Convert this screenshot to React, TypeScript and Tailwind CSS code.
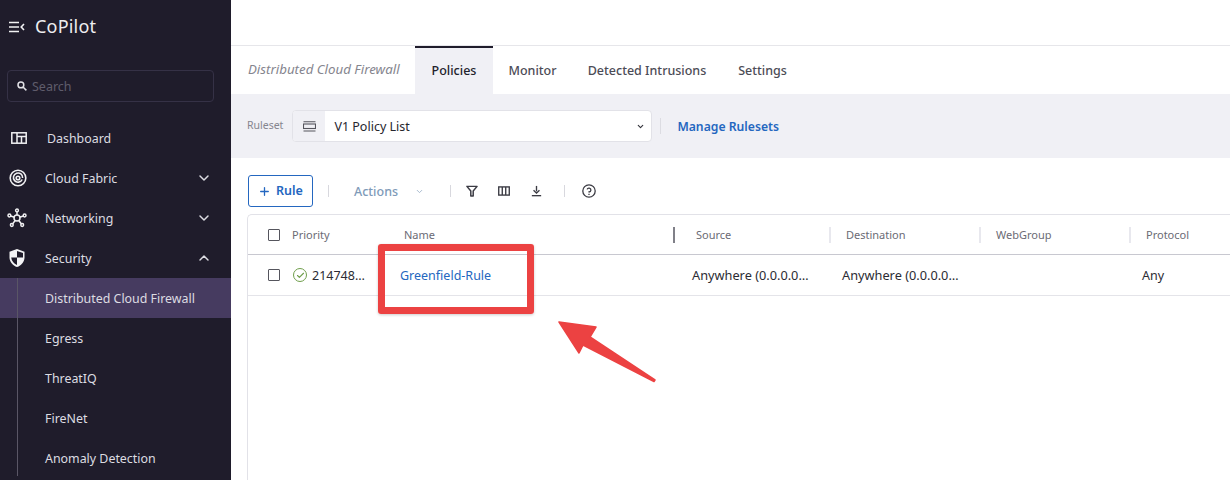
import { FC, ReactNode } from "react";
import { ChevronDown, ChevronUp, Plus, Check } from "lucide-react";

const font = { fontFamily: '"Noto Sans", sans-serif' };

const NavRow: FC<{ icon?: ReactNode; label: string; open?: boolean }> = ({ icon, label, open }) => (
  <div className="flex h-10 items-center pl-[8px] pr-[19px] text-[#dddce2]">
    <div className="flex w-[37px] justify-start pl-[1px]">{icon}</div>
    <span className="relative top-[1px] flex-1 text-[12.4px]">{label}</span>
    {open ? <ChevronUp size={16} strokeWidth={2.2} /> : <ChevronDown size={16} strokeWidth={2.2} />}
  </div>
);

const SubRow: FC<{ label: string; active?: boolean }> = ({ label, active }) => (
  <div className={`flex h-10 items-center pl-[45px] pt-[2px] text-[12.4px] text-[#dddce2] ${active ? "bg-[#463b60]" : ""}`}>{label}</div>
);

const Sidebar = () => (
  <aside className="flex h-[480px] w-[231px] shrink-0 flex-col overflow-hidden bg-[#1f1c2b]">
    <div className="flex h-[53px] items-center pl-[9px]">
      <svg width="16" height="12" viewBox="0 0 16 12" fill="none" stroke="#f2f2f4" strokeWidth="1.6">
        <path d="M0 1.5h10M0 6h10M0 10.5h10" />
        <path d="M15 3L12.2 6l2.8 3" />
      </svg>
      <span className="ml-[10px] text-[18px] tracking-[0.2px] text-[#eeeef0]">CoPilot</span>
    </div>
    <div className="ml-[7px] mr-[17px] mt-[17px] flex h-[32px] items-center rounded-[4px] border border-[#353146] pl-[9px]">
      <svg width="10" height="10" viewBox="0 0 10 10" fill="none" stroke="#e2e2e6" strokeWidth="1.5">
        <circle cx="3.9" cy="3.9" r="2.9" />
        <path d="M6 6l3.4 3.4" />
      </svg>
      <span className="relative top-[1px] ml-[5px] text-[12.5px] text-[#5f5c6c]">Search</span>
    </div>
    <div className="mt-[16px]">
      <div className="flex h-10 items-center pl-[11px] text-[#dddce2]">
        <svg width="16" height="12" viewBox="0 0 16 12" fill="none" stroke="#f0f0f2" strokeWidth="1.5">
          <rect x="0.8" y="0.8" width="14.4" height="10.4" />
          <path d="M6 1v10M6 4.5h9.2M10.5 4.5v6.5" />
        </svg>
        <span className="relative top-[1px] ml-[20px] text-[12.4px]">Dashboard</span>
      </div>
      <NavRow
        label="Cloud Fabric"
        icon={
          <svg width="18" height="18" viewBox="0 0 18 18" fill="none" stroke="#f0f0f2" strokeWidth="1.6">
            <circle cx="9" cy="9" r="7.8" />
            <path d="M13.2 10.5A4.6 4.6 0 1 1 13.6 9" />
            <circle cx="9" cy="9" r="1.8" />
          </svg>
        }
      />
      <NavRow
        label="Networking"
        icon={
          <svg width="20" height="20" viewBox="0 0 20 20" fill="none" stroke="#f0f0f2" strokeWidth="1.5" className="-ml-[2px]">
            <path d="M10 3.5v3.5M3.5 8l4 1.3M16.5 8l-4 1.3M5.5 16l2.7-3.5M14.5 16l-2.7-3.5" />
            <circle cx="10" cy="10" r="3" />
            <circle cx="10" cy="2.4" r="1.4" />
            <circle cx="2.4" cy="7.5" r="1.4" />
            <circle cx="17.6" cy="7.5" r="1.4" />
            <circle cx="4.8" cy="17" r="1.4" />
            <circle cx="15.2" cy="17" r="1.4" />
          </svg>
        }
      />
      <NavRow
        label="Security"
        open
        icon={
          <svg width="16" height="18" viewBox="0 0 16 18">
            <path d="M8 0L0.5 2.8v5.4C0.5 12.8 3.7 16.6 8 18c4.3-1.4 7.5-5.2 7.5-9.8V2.8z" fill="#f4f4f6" />
            <path d="M8 2L14 4.1V8.6H8zM8 8.6H2.2C2.6 12 4.8 14.9 8 16.1z" fill="#1f1c2b" />
          </svg>
        }
      />
      <div className="relative">
        <SubRow label="Distributed Cloud Firewall" active />
        <SubRow label="Egress" />
        <SubRow label="ThreatIQ" />
        <SubRow label="FireNet" />
        <SubRow label="Anomaly Detection" />
        <div className="absolute bottom-[2px] left-[17px] top-0 w-px bg-[#5a5666]" />
      </div>
    </div>
  </aside>
);

const Tab: FC<{ label: string; width?: string; active?: boolean }> = ({ label, width, active }) => (
  <div
    className={`flex h-full items-center justify-center border-t-2 text-[12.5px] font-medium ${width} ${
      active ? "border-[#1f1c2b] bg-[#f0f0f5] text-[#22222c]" : "border-transparent text-[#4c4c56]"
    }`}
  >
    {label}
  </div>
);

const Sep = () => <div className="h-[12px] w-px bg-[#d8d8de]" />;

const HeadCell: FC<{ label: string; width: string; dark?: boolean; pad?: string }> = ({ label, width, dark, pad = "pl-[15px]" }) => (
  <div className={`relative flex h-full shrink-0 items-center pt-[1px] ${width} ${pad} text-[11px] text-[#6b6b75]`}>
    {label}
    <div className={`absolute right-0 top-[12px] h-[16px] w-[2px] ${dark ? "bg-[#808088]" : "bg-[#e8e8ee]"}`} />
  </div>
);

const Checkbox = () => <div className="h-[12px] w-[12px] rounded-[1px] border-[1.5px] border-[#55555d]" />;

const Main = () => (
  <main className="min-w-0 flex-1 bg-white">
    <div className="h-[46px] border-b border-[#e6e6ea]" />
    <div className="flex h-[48px] items-center">
      <span className="ml-[17px] w-[167px] text-[13.3px] italic text-[#85858e]">Distributed Cloud Firewall</span>
      <Tab label="Policies" width="w-[78px]" active />
      <Tab label="Monitor" width="w-[79px]" />
      <Tab label="Detected Intrusions" width="w-[150px]" />
      <Tab label="Settings" width="w-[81px]" />
    </div>
    <div className="flex h-[64px] items-center bg-[#f0f0f5] pl-[16px]">
      <span className="text-[10.5px] text-[#85858e]">Ruleset</span>
      <div className="ml-[9px] flex h-[32px] w-[360px] items-center overflow-hidden rounded-[4px] border border-[#e2e2e8] bg-white">
        <div className="flex h-full w-[32px] items-center justify-center bg-[#f0f0f5]">
          <svg width="13" height="11" viewBox="0 0 13 11" fill="none" stroke="#55555d" strokeWidth="1.1">
            <path d="M0.5 0.8h12" />
            <rect x="0.5" y="3" width="12" height="4.5" />
            <path d="M0.5 10h12" />
          </svg>
        </div>
        <span className="relative top-[1px] ml-[9px] flex-1 text-[12.5px] text-[#26262e]">V1 Policy List</span>
        <ChevronDown size={9} strokeWidth={3} className="mr-[6px] text-[#33333b]" />
      </div>
      <div className="ml-[8px] h-[16px] w-px bg-[#dcdce2]" />
      <span className="relative top-[1px] ml-[16px] text-[12.2px] font-semibold text-[#2467c0]">Manage Rulesets</span>
    </div>
    <div className="flex h-[56px] items-center pl-[17px] pt-[10px]">
      <div className="flex h-[32px] w-[65px] items-center justify-center gap-[5px] rounded-[3px] border border-[#2467c0] pt-[1px] text-[12.5px] font-semibold text-[#2467c0]">
        <Plus size={13} strokeWidth={2.4} />
        Rule
      </div>
      <div className="ml-[15px]"><Sep /></div>
      <span className="relative top-[1px] ml-[25px] text-[12.5px] font-medium text-[#7e9ab8]">Actions</span>
      <ChevronDown size={9} strokeWidth={2.4} className="ml-[17px] text-[#9fb3c9]" />
      <div className="ml-[26px]"><Sep /></div>
      <svg width="12" height="12" viewBox="0 0 13 13" fill="none" stroke="#3b3b43" strokeWidth="1.6" className="ml-[15px]">
        <path d="M1 1.5h11L7.8 6.6v5.2H5.2V6.6z" strokeLinejoin="round" />
      </svg>
      <svg width="12" height="10" viewBox="0 0 13 11" fill="none" stroke="#3b3b43" strokeWidth="1.5" className="ml-[20px]">
        <rect x="0.7" y="1" width="11.6" height="9" />
        <path d="M4.6 1v9M8.4 1v9" />
      </svg>
      <svg width="11" height="12" viewBox="0 0 13 13" fill="none" stroke="#3b3b43" strokeWidth="1.6" className="ml-[21px]">
        <path d="M6.5 0.5v6.5" />
        <path d="M3 5.5L6.5 9 10 5.5" />
        <path d="M1 12h11" />
      </svg>
      <div className="ml-[22px]"><Sep /></div>
      <svg width="14" height="14" viewBox="0 0 14 14" fill="none" stroke="#3b3b43" strokeWidth="1.3" className="ml-[17px]">
        <circle cx="7" cy="7" r="6.2" />
        <path d="M5.1 5.4A1.95 1.95 0 1 1 7 8v.6" />
        <path d="M7 9.8v1.2" />
      </svg>
    </div>
    <div className="ml-[16px] h-[266px] rounded-tl-[5px] border-l border-t border-[#e2e2e8]">
      <div className="flex h-[40px] items-center border-b border-[#c8c8d0]">
        <div className="flex h-full w-[140px] shrink-0 items-center">
          <div className="ml-[20px]"><Checkbox /></div>
          <span className="relative top-[1px] ml-[12px] text-[11px] text-[#6b6b75]">Priority</span>
        </div>
        <div className="h-[16px] w-[2px] bg-[#e8e8ee]" />
        <HeadCell label="Name" width="w-[287px]" dark pad="pl-[16px]" />
        <HeadCell label="Source" width="w-[156px]" pad="pl-[21px]" />
        <HeadCell label="Destination" width="w-[150px]" />
        <HeadCell label="WebGroup" width="w-[150px]" />
        <HeadCell label="Protocol" width="w-[150px]" />
      </div>
      <div className="flex h-[41px] items-center border-b border-[#e4e4e9] text-[12.5px] text-[#2b2b33]">
        <div className="ml-[20px]"><Checkbox /></div>
        <div className="ml-[13px] flex h-[14px] w-[14px] items-center justify-center rounded-full border-[1.5px] border-[#6f9e4b]">
          <Check size={9} strokeWidth={3} className="text-[#6f9e4b]" />
        </div>
        <span className="relative top-[1px] ml-[5px] w-[74px]">214748…</span>
        <span className="relative top-[1px] ml-[14px] w-[292px] text-[#2467c0]">Greenfield-Rule</span>
        <span className="relative top-[1px] w-[150px] text-[12.75px]">Anywhere (0.0.0.0…</span>
        <span className="relative top-[1px] w-[300px] text-[12.75px]">Anywhere (0.0.0.0…</span>
        <span className="relative top-[1px]">Any</span>
      </div>
    </div>
  </main>
);

const App = () => (
  <div className="relative flex h-[480px] w-[1230px] overflow-hidden" style={font}>
    <Sidebar />
    <Main />
    <div className="absolute left-[378px] top-[244px] h-[70px] w-[156px] rounded-[3px] border-[7px] border-[#ec4242] shadow-[0_1px_3px_rgba(0,0,0,0.2)]" />
    <svg className="absolute left-[555px] top-[318px]" width="104" height="68" viewBox="0 0 104 68">
      <path d="M4 4L41 9 35 19 100 62 99 63.5 28 27 24 35Z" fill="#ec4242" stroke="#ec4242" strokeWidth="1.5" strokeLinejoin="round" />
    </svg>
  </div>
);

export default App;
